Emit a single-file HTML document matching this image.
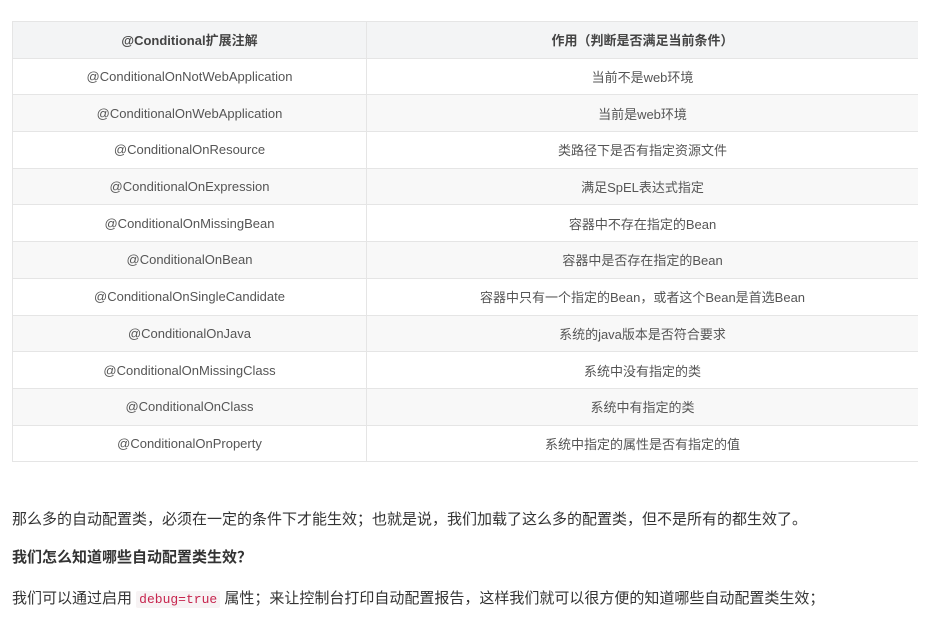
<!DOCTYPE html>
<html><head><meta charset="utf-8"><style>
body{margin:0;background:#fff;font-family:"Liberation Sans","Noto Sans CJK SC",sans-serif;overflow:hidden;}
table{position:absolute;left:12px;top:21px;border-collapse:collapse;width:906px;}
td,th{border:1px solid #e5e5e5;height:35.7px;padding:0;text-align:center;font-size:13px;color:#555;}
th{background:#f3f4f5;font-weight:bold;color:#444;}
tr td{background:#fff;}
tr:nth-child(odd) td{background:#f8f8f8;}
td:last-child,th:last-child{border-right:none;}
col.a{width:354px}
p{position:absolute;left:12px;margin:0;font-size:15px;color:#333;white-space:nowrap;}
code{font-family:"Liberation Mono",monospace;font-size:13px;color:#c7254e;background:#f7f3f4;padding:1px 3px;border-radius:2px;}
</style></head><body>
<table><colgroup><col class="a"><col></colgroup>
<tr><th>@Conditional扩展注解</th><th>作用（判断是否满足当前条件）</th></tr>
<tr><td>@ConditionalOnNotWebApplication</td><td>当前不是web环境</td></tr>
<tr><td>@ConditionalOnWebApplication</td><td>当前是web环境</td></tr>
<tr><td>@ConditionalOnResource</td><td>类路径下是否有指定资源文件</td></tr>
<tr><td>@ConditionalOnExpression</td><td>满足SpEL表达式指定</td></tr>
<tr><td>@ConditionalOnMissingBean</td><td>容器中不存在指定的Bean</td></tr>
<tr><td>@ConditionalOnBean</td><td>容器中是否存在指定的Bean</td></tr>
<tr><td>@ConditionalOnSingleCandidate</td><td>容器中只有一个指定的Bean，或者这个Bean是首选Bean</td></tr>
<tr><td>@ConditionalOnJava</td><td>系统的java版本是否符合要求</td></tr>
<tr><td>@ConditionalOnMissingClass</td><td>系统中没有指定的类</td></tr>
<tr><td>@ConditionalOnClass</td><td>系统中有指定的类</td></tr>
<tr><td>@ConditionalOnProperty</td><td>系统中指定的属性是否有指定的值</td></tr>
</table>
<p style="top:508px">那么多的自动配置类，必须在一定的条件下才能生效；也就是说，我们加载了这么多的配置类，但不是所有的都生效了。</p>
<p style="top:546px;font-weight:bold">我们怎么知道哪些自动配置类生效？</p>
<p style="top:587px">我们可以通过启用 <code>debug=true</code> 属性；来让控制台打印自动配置报告，这样我们就可以很方便的知道哪些自动配置类生效；</p>
</body></html>
